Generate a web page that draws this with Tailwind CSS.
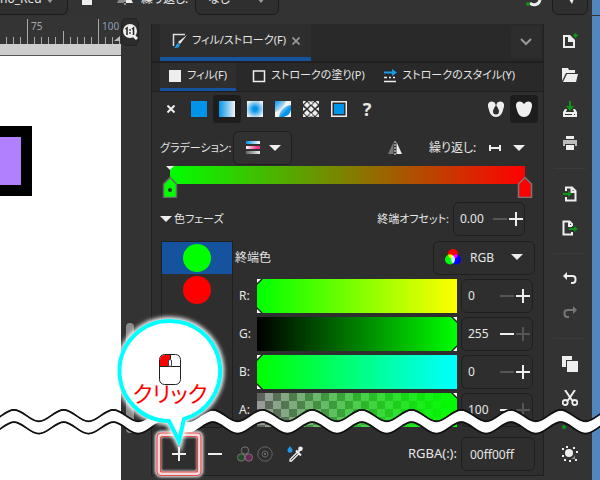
<!DOCTYPE html>
<html lang="ja">
<head>
  <meta charset="UTF-8" />
  <title>フィル/ストローク</title>
  <script src="https://cdn.jsdelivr.net/npm/@tailwindcss/browser@4"></script>
</head>
<body class="relative flex flex-col min-h-screen overflow-hidden bg-[#333] text-[#e6e6e6] text-xs font-['Noto_Sans','Noto_Sans_CJK_JP',sans-serif] [font-feature-settings:'palt']">

  <!-- tool controls -->
  <header class="flex items-end h-4 pb-px overflow-hidden shrink-0">
    <div class="relative w-[68px] h-8 shrink-0">
      <select aria-label="グラデーション" class="appearance-none w-full h-8 border border-[#1c1c1c] border-l-0 rounded-r-md bg-[#2f2f2f]"><option>no_Red</option></select>
      <svg class="absolute right-3 top-3 w-3 h-2" viewBox="0 0 12 8"><path d="M2 3h8L6 8z" fill="#999"/></svg>
    </div>
    <svg class="w-3 h-8 ml-[13px] shrink-0" viewBox="0 0 12 32"><path d="M1 10h10v12H1z" fill="#eee"/></svg>
    <svg class="w-4 h-8 ml-6 shrink-0" viewBox="0 0 16 32"><path d="M7 6v14H0z" fill="#888"/><path d="M9 6v14h7z" fill="#eee"/><path d="M8 5v18" stroke="#eee" stroke-dasharray="2 1"/></svg>
    <span class="h-8 leading-8 ml-2 w-[54px] whitespace-nowrap">繰り返し:</span>
    <div class="relative w-[84px] h-8 shrink-0">
      <select aria-label="繰り返し" class="appearance-none w-full h-8 pl-3 border border-[#1c1c1c] rounded-md bg-[#2f2f2f]"><option>なし</option></select>
      <svg class="absolute right-3 top-3 w-3 h-2" viewBox="0 0 12 8"><path d="M2 3h8L6 8z" fill="#999"/></svg>
    </div>
    <svg class="w-5 h-8 ml-auto shrink-0" viewBox="0 0 20 32"><path d="M8 20c3 3 9 2 10-3" fill="none" stroke="#eee" stroke-width="3"/><circle cx="6" cy="21" r="2" fill="#0a9614"/></svg>
    <button aria-label="スナップ" class="flex items-center justify-center w-9 h-8 ml-2.5 mr-1 border border-[#1c1c1c] rounded-md bg-[#2f2f2f] shrink-0">
      <svg class="w-4 h-4" viewBox="0 0 16 16"><path d="M5 5h8l-3 8z" fill="#eee"/></svg>
    </button>
    <div class="w-2 h-8 bg-[#5286bf] shrink-0"></div>
  </header>

  <main class="flex grow">
    <!-- canvas and ruler -->
    <section class="w-[121px] shrink-0 bg-white">
      <svg class="w-full h-10" viewBox="0 0 121 40">
        <defs>
          <pattern id="ticks" x="27" y="0" width="71" height="28" patternUnits="userSpaceOnUse">
            <path d="M.5 3v25M7.500 21v7M14.500 21v7M21.500 21v7M28.500 21v7M36.500 15v13M43.500 21v7M50.500 21v7M57.500 21v7M64.500 21v7" stroke="#aaa"/>
          </pattern>
        </defs>
        <path d="M0 0h121v28H0z" fill="#343434"/>
        <path d="M0 0h121v28H0z" fill="url(#ticks)"/>
        <path d="M0 28h121v11H0z" fill="#cdcdcd"/>
        <path d="M0 39h121v1H0z" fill="#555"/>
        <path d="M114 25h6v-5z" fill="#bbb"/>
        <text x="31" y="14" font-size="10" fill="#aaa">75</text>
        <text x="102" y="14" font-size="10" fill="#8b9db8">100</text>
      </svg>
      <svg class="w-8 h-[70px] mt-[70px]" viewBox="0 0 32 70"><path d="M0 0h32v70H0z"/><path d="M0 11h21v48H0z" fill="#b080ff"/></svg>
    </section>

    <!-- zoom button and vertical scrollbar -->
    <div class="flex flex-col items-start w-[30px] shrink-0">
      <button aria-label="1:1" class="flex items-center w-[18px] h-7 mt-0.5 border border-[#222] rounded-md bg-[#2c2c2c]">
        <svg class="w-4 h-4" viewBox="0 0 16 16"><circle cx="8" cy="7" r="7" fill="#eee"/><path d="M11 11l4 4" stroke="#eee" stroke-width="3"/><path d="M3.500 5L5 4v7M10 5l1.500-1v7" fill="none" stroke="#222" stroke-width="1.500"/><path d="M8 5v2M8 8v2" stroke="#222" stroke-width="1.200"/></svg>
      </button>
      <div class="w-2 h-[110px] mt-[277px] ml-[5px] rounded-full bg-[#8c8c8c]"></div>
    </div>

    <!-- fill and stroke dialog -->
    <section class="flex flex-col grow min-w-0 mt-2 mb-1 border-x border-b border-[#202020] bg-[#2e2e2e]">
      <div class="flex h-[38px] pl-2 pr-0.5 bg-[#292929] border-b border-[#1f1f1f]">
        <div class="flex items-center w-[151px] pl-3 gap-1 bg-[#2e2e2e] border-b-4 border-[#16539f]">
          <svg class="w-4 h-4 shrink-0" viewBox="0 0 16 16"><path d="M13 1.500H1.500V13" fill="none" stroke="#ddd" stroke-width="1.500"/><path d="M15 2L8 11 6 9z" fill="#eee"/><path d="M6 10l2 2c-1 3-3 3-6 3 2-1 2-4 4-5z" fill="#1b9ae8"/></svg>
          <button class="text-[11px] whitespace-nowrap">フィル/ストローク(F)</button>
          <button aria-label="閉じる" class="ml-0.5"><svg class="w-2 h-2" viewBox="0 0 8 8"><path d="M.5.5l7 7m0-7l-7 7" stroke="#999" stroke-width="1.700"/></svg></button>
        </div>
        <button aria-label="メニュー" class="flex items-center justify-center w-[30px] h-8 ml-auto mt-0.5 bg-[#2d2d2d]">
          <svg class="w-3 h-2" viewBox="0 0 12 8"><path d="M1 1l5 5 5-5" fill="none" stroke="#999" stroke-width="2"/></svg>
        </button>
      </div>

      <div class="flex h-[30px] pl-2 bg-[#292929] border-y border-[#1f1f1f] text-[11px] whitespace-nowrap">
        <button class="flex items-center gap-1 w-[76px] pl-[7px] border-b-[3px] border-[#16539f] bg-[#2e2e2e]">
          <svg class="w-4 h-4" viewBox="0 0 16 16"><path d="M2 2h12v12H2z" fill="#eee"/></svg>フィル(F)
        </button>
        <button class="flex items-center gap-1 ml-[15px] pb-[3px]">
          <svg class="w-4 h-4" viewBox="0 0 16 16"><path d="M2.500 3h11v10.500h-11z" fill="none" stroke="#eee" stroke-width="1.500"/></svg>ストロークの塗り(P)
        </button>
        <button class="flex items-center gap-1 ml-auto mr-7 pb-[3px]">
          <svg class="w-4 h-4" viewBox="0 0 16 16"><path d="M2 3.500h8V1l5 3.500L10 8V5.500H2z" fill="#1b9ae8"/><path d="M2 9.500h3m2 0h2m2 0h2M2 13.500h12" stroke="#eee" stroke-width="1.500"/></svg>ストロークのスタイル(Y)
        </button>
      </div>

      <div class="flex h-7 mt-[3px] px-[5px]">
        <button aria-label="なし" class="flex items-center justify-center w-7"><svg class="w-2 h-2" viewBox="0 0 8 8"><path d="M.5.5l7 7m0-7l-7 7" stroke="#eee" stroke-width="2"/></svg></button>
        <button aria-label="単一色" class="flex items-center justify-center w-7"><svg class="w-4 h-4" viewBox="0 0 16 16"><path d="M0 0h16v16H0z" fill="#0094ea"/></svg></button>
        <button aria-label="線形グラデーション" class="flex items-center justify-center w-7 rounded bg-[#1d1d1d]">
          <svg class="w-4 h-4" viewBox="0 0 16 16"><defs><linearGradient id="lin"><stop stop-color="#0094ea"/><stop offset="1" stop-color="#f4f4f4"/></linearGradient></defs><path d="M0 0h16v16H0z" fill="url(#lin)"/></svg>
        </button>
        <button aria-label="放射グラデーション" class="flex items-center justify-center w-7">
          <svg class="w-4 h-4" viewBox="0 0 16 16"><defs><radialGradient id="rad" r=".6"><stop offset=".2" stop-color="#0094ea"/><stop offset="1" stop-color="#f4f4f4"/></radialGradient></defs><path d="M0 0h16v16H0z" fill="url(#rad)"/></svg>
        </button>
        <button aria-label="メッシュ" class="flex items-center justify-center w-7">
          <svg class="w-4 h-4" viewBox="0 0 16 16"><defs><linearGradient id="mesh" x2="1" y2="1"><stop stop-color="#0094ea"/><stop offset=".8" stop-color="#f4f4f4"/></linearGradient><linearGradient id="mesh2" x2="1" y2="1"><stop offset=".1" stop-color="#d5ecfa"/><stop offset=".6" stop-color="#0094ea"/></linearGradient></defs><path d="M0 0h16v16H0z" fill="#f4f4f4"/><path d="M0 0h11C9 6 6 9 0 11z" fill="url(#mesh)"/><path d="M16 4v5c-1 4-3 6-7 7H4C5 9 9 5 16 4z" fill="url(#mesh2)"/><path d="M16 9v7H9c4-1 6-3 7-7z" fill="#f4f4f4"/></svg>
        </button>
        <button aria-label="パターン" class="flex items-center justify-center w-7">
          <svg class="w-4 h-4" viewBox="0 0 16 16"><path d="M0 0h3L1.500 2 0 3zM5 0h2L6 2zM9 0h2l-1 2zM13 0h3v3l-2-1zM0 13l2 1 1 2H0zM6 14l1 2H5zM10 14l1 2H9zM16 13v3h-3l1-2z" fill="#eee"/><path d="M4 1l3 3-3 3-3-3zM12 1l3 3-3 3-3-3zM8 5l3 3-3 3-3-3zM4 9l3 3-3 3-3-3zM12 9l3 3-3 3-3-3zM0 6l3 2-3 2zM16 6v4l-3-2zM8 0l2 2-2 2-2-2zM8 12l2 2-2 2-2-2z" fill="#eee"/></svg>
        </button>
        <button aria-label="スウォッチ" class="flex items-center justify-center w-7"><svg class="w-4 h-4" viewBox="0 0 16 16"><path d="M.75.75h14.500v14.500H.75z" fill="none" stroke="#eee" stroke-width="1.500"/><path d="M3 3h10v10H3z" fill="#0094ea"/></svg></button>
        <button aria-label="未設定" class="flex items-center justify-center w-7 text-lg font-bold">?</button>
        <button aria-label="奇偶" class="flex items-center justify-center w-7 ml-auto">
          <svg class="w-4 h-4" viewBox="0 0 16 16"><path fill-rule="evenodd" d="M8 3C6 0 3 0 1.500 1-1 3 0 6 1 9c1 4 3 7 7 7s6-3 7-7c1-3 2-6-.5-8C13 0 10 0 8 3zm0 1c1 2 3 4 3 6.500a3 3 0 0 1-6 0C5 8 7 6 8 4z" fill="#eee"/><path d="M6.500 0h3L8 5z" fill="#2e2e2e"/></svg>
        </button>
        <button aria-label="非ゼロ" class="flex items-center justify-center w-7 rounded bg-[#1d1d1d]">
          <svg class="w-4 h-4" viewBox="0 0 16 16"><path d="M8 3C6 0 3 0 1.500 1-1 3 0 6 1 9c1 4 3 7 7 7s6-3 7-7c1-3 2-6-.5-8C13 0 10 0 8 3z" fill="#eee"/></svg>
        </button>
      </div>

      <div class="flex items-center h-[34px] mt-2 pl-2 pr-[18px] whitespace-nowrap">
        <span class="w-[73px] text-[11px]">グラデーション:</span>
        <button aria-label="グラデーションを選択" class="flex items-center justify-center gap-2 w-[59px] h-[34px] border border-[#1f1f1f] rounded-md bg-[#313131]">
          <svg class="w-4 h-4" viewBox="0 0 16 16"><defs><linearGradient id="g1"><stop stop-color="#0094ea"/><stop offset="1" stop-color="#fff"/></linearGradient><linearGradient id="g2"><stop stop-color="#fff"/><stop offset=".8" stop-color="#f0308c"/></linearGradient><linearGradient id="g3"><stop stop-color="#666"/><stop offset="1" stop-color="#eee"/></linearGradient></defs><path d="M1 1h14v3H1z" fill="url(#g1)"/><path d="M1 6h14v3H1z" fill="url(#g2)"/><path d="M1 11h14v3H1z" fill="url(#g3)"/></svg>
          <svg class="w-3 h-2" viewBox="0 0 12 8"><path d="M0 1h12L6 7z" fill="#eee"/></svg>
        </button>
        <button aria-label="反転" class="ml-auto"><svg class="w-4 h-4" viewBox="0 0 16 16"><path d="M6.500 2v12H1z" fill="#777"/><path d="M9.500 2v12H15z" fill="#eee"/><path d="M8 1v14" stroke="#eee" stroke-dasharray="2 1"/></svg></button>
        <span class="ml-[26px] w-11">繰り返し:</span>
        <button aria-label="繰り返しの種類" class="flex items-center gap-3 ml-4">
          <svg class="w-3 h-3" viewBox="0 0 12 12"><path d="M1 3v6M11 3v6M1 6h10" stroke="#eee" stroke-width="2" fill="none"/></svg>
          <svg class="w-3 h-2" viewBox="0 0 12 8"><path d="M0 1h12L6 7z" fill="#eee"/></svg>
        </button>
      </div>

      <div class="relative h-[34px] mx-[18px] mt-px">
        <div class="h-[18px] bg-[linear-gradient(to_right,#0f0,#f00)]"></div>
        <svg class="absolute -left-2 top-0 w-4 h-8" viewBox="0 0 16 32"><path d="M4 0h8L8 4z" fill="#eee"/><path d="M8 11.500l6.500 6.500v13.500h-13V18z" fill="#0f0" stroke="#666" stroke-width="1.500"/><circle cx="8" cy="24" r="2" fill="#333"/></svg>
        <svg class="absolute -right-2 top-0 w-4 h-8" viewBox="0 0 16 32"><path d="M8 11.500l6.500 6.500v13.500h-13V18z" fill="#f00" stroke="#777" stroke-width="1.500"/></svg>
      </div>

      <div class="flex items-center h-[34px] mt-0.5 pl-2 pr-[18px] text-[11px] whitespace-nowrap">
        <button class="flex items-center gap-0.5"><svg class="w-3 h-2" viewBox="0 0 12 8"><path d="M0 1h12L6 7z" fill="#eee"/></svg>色フェーズ</button>
        <label for="offset" class="ml-auto mr-1">終端オフセット:</label>
        <div class="flex items-center w-[72px] h-[34px] pl-1.5 border border-[#1f1f1f] rounded-md">
          <input id="offset" value="0.00" class="w-8 min-w-0 text-xs" />
          <button aria-label="減らす"><svg class="w-4 h-4" viewBox="0 0 16 16"><path d="M1 8h14" stroke="#555" stroke-width="2"/></svg></button>
          <button aria-label="増やす"><svg class="w-4 h-4" viewBox="0 0 16 16"><path d="M1 8h14M8 1v14" stroke="#eee" stroke-width="2"/></svg></button>
        </div>
      </div>

      <div class="flex mt-[5px] pl-[9px] pr-2 h-[187px]">
        <div class="w-[72px] border border-[#1f1f1f] shrink-0">
          <button aria-label="緑" class="flex items-center justify-center w-full h-8 bg-[#16539f]"><span class="w-7 h-7 rounded-full bg-[#0f0]"></span></button>
          <button aria-label="赤" class="flex items-center justify-center w-full h-8"><span class="w-7 h-7 rounded-full bg-[#f00]"></span></button>
        </div>
        <div class="flex flex-col gap-1 grow pl-0.5">
          <div class="flex items-center justify-between h-[34px]">
            <label for="mode">終端色</label>
            <div class="relative w-[102px] h-[34px]">
              <select id="mode" class="appearance-none w-full h-full pl-9 border border-[#1f1f1f] rounded-md bg-[#2e2e2e]"><option>RGB</option></select>
              <svg class="absolute left-3 top-2 w-4 h-4 pointer-events-none" viewBox="0 0 16 16"><circle cx="8" cy="5" r="5" fill="#f00"/><circle cx="5" cy="10.500" r="5" fill="#0f0"/><circle cx="11" cy="10.500" r="5" fill="#00f"/><path d="M8 6.500A5 5 0 0 0 3.200 5.800 5 5 0 0 0 8 10z" fill="#ff0"/><path d="M8 6.500a5 5 0 0 1 4.800-.7A5 5 0 0 1 8 10z" fill="#f0f"/><path d="M8 6.500a5 5 0 0 0 0 8 5 5 0 0 0 0-8z" fill="#bff"/></svg>
              <svg class="absolute right-3 top-3 w-3 h-2 pointer-events-none" viewBox="0 0 12 8"><path d="M0 1h12L6 7z" fill="#eee"/></svg>
            </div>
          </div>
          <div class="flex items-center h-[34px] pr-0.5">
            <label for="r" class="w-4 ml-1 mr-0.5">R:</label>
            <div class="relative grow h-[34px]">
              <input id="r" type="range" min="0" max="255" value="0" class="block appearance-none w-full h-full bg-[linear-gradient(to_right,#0f0,#ff0)] [&::-webkit-slider-thumb]:appearance-none" />
              <svg class="absolute left-0 top-0 w-2 h-[34px] pointer-events-none" viewBox="0 0 8 34"><path d="M0 0h6L0 6zM0 34h6L0 28z" fill="#222"/><path d="M0 0h4L0 4zM0 34h4L0 30z" fill="#fff"/></svg>
            </div>
            <div class="flex items-center w-[72px] h-[34px] ml-1 pl-1.5 border border-[#1f1f1f] rounded-md">
              <input aria-label="R" value="0" class="w-[31px] min-w-0" />
              <button aria-label="減らす"><svg class="w-4 h-4" viewBox="0 0 16 16"><path d="M1 8h14" stroke="#555" stroke-width="2"/></svg></button>
              <button aria-label="増やす"><svg class="w-4 h-4" viewBox="0 0 16 16"><path d="M1 8h14M8 1v14" stroke="#eee" stroke-width="2"/></svg></button>
            </div>
          </div>
          <div class="flex items-center h-[34px] pr-0.5">
            <label for="g" class="w-4 ml-1 mr-0.5">G:</label>
            <div class="relative grow h-[34px]">
              <input id="g" type="range" min="0" max="255" value="255" class="block appearance-none w-full h-full bg-[linear-gradient(to_right,#000,#0f0)] [&::-webkit-slider-thumb]:appearance-none" />
              <svg class="absolute right-0 top-0 w-2 h-[34px] pointer-events-none" viewBox="0 0 8 34"><path d="M8 0H2l6 6zM8 34H2l6-6z" fill="#222"/><path d="M8 0H4l4 4zM8 34H4l4-4z" fill="#fff"/></svg>
            </div>
            <div class="flex items-center w-[72px] h-[34px] ml-1 pl-1.5 border border-[#1f1f1f] rounded-md">
              <input aria-label="G" value="255" class="w-[31px] min-w-0" />
              <button aria-label="減らす"><svg class="w-4 h-4" viewBox="0 0 16 16"><path d="M1 8h14" stroke="#eee" stroke-width="2"/></svg></button>
              <button aria-label="増やす"><svg class="w-4 h-4" viewBox="0 0 16 16"><path d="M1 8h14M8 1v14" stroke="#555" stroke-width="2"/></svg></button>
            </div>
          </div>
          <div class="flex items-center h-[34px] pr-0.5">
            <label for="b" class="w-4 ml-1 mr-0.5">B:</label>
            <div class="relative grow h-[34px]">
              <input id="b" type="range" min="0" max="255" value="0" class="block appearance-none w-full h-full bg-[linear-gradient(to_right,#0f0,#0ff)] [&::-webkit-slider-thumb]:appearance-none" />
              <svg class="absolute left-0 top-0 w-2 h-[34px] pointer-events-none" viewBox="0 0 8 34"><path d="M0 0h6L0 6zM0 34h6L0 28z" fill="#222"/><path d="M0 0h4L0 4zM0 34h4L0 30z" fill="#fff"/></svg>
            </div>
            <div class="flex items-center w-[72px] h-[34px] ml-1 pl-1.5 border border-[#1f1f1f] rounded-md">
              <input aria-label="B" value="0" class="w-[31px] min-w-0" />
              <button aria-label="減らす"><svg class="w-4 h-4" viewBox="0 0 16 16"><path d="M1 8h14" stroke="#555" stroke-width="2"/></svg></button>
              <button aria-label="増やす"><svg class="w-4 h-4" viewBox="0 0 16 16"><path d="M1 8h14M8 1v14" stroke="#eee" stroke-width="2"/></svg></button>
            </div>
          </div>
          <div class="flex items-center h-[34px] pr-0.5">
            <label for="a" class="w-4 ml-1 mr-0.5">A:</label>
            <div class="relative grow h-[34px]">
              <input id="a" type="range" min="0" max="100" value="100" class="block appearance-none w-full h-full bg-[linear-gradient(to_right,#00ff0000,#00ff00),repeating-conic-gradient(#9a9a9a_0_25%,#606060_0_50%)] bg-[length:auto,16px_16px] [&::-webkit-slider-thumb]:appearance-none" />
              <svg class="absolute right-0 top-0 w-2 h-[34px] pointer-events-none" viewBox="0 0 8 34"><path d="M8 0H2l6 6z" fill="#222"/><path d="M8 0H4l4 4z" fill="#fff"/></svg>
            </div>
            <div class="flex items-center w-[72px] h-[34px] ml-1 pl-1.5 border border-[#1f1f1f] rounded-md">
              <input aria-label="A" value="100" class="w-[31px] min-w-0" />
              <button aria-label="減らす"><svg class="w-4 h-4" viewBox="0 0 16 16"><path d="M1 8h14" stroke="#eee" stroke-width="2"/></svg></button>
              <button aria-label="増やす"><svg class="w-4 h-4" viewBox="0 0 16 16"><path d="M1 8h14M8 1v14" stroke="#555" stroke-width="2"/></svg></button>
            </div>
          </div>
        </div>
      </div>

      <div class="flex items-center h-[34px] mt-[9px] pl-[9px] pr-2">
        <button aria-label="色フェーズを追加" class="flex items-center justify-center w-9 h-[34px] border border-[#1f1f1f] rounded-md"><svg class="w-4 h-4" viewBox="0 0 16 16"><path d="M1 8h14M8 1v14" stroke="#eee" stroke-width="2"/></svg></button>
        <button aria-label="色フェーズを削除" class="flex items-center justify-center w-9"><svg class="w-4 h-4" viewBox="0 0 16 16"><path d="M1 8h14" stroke="#eee" stroke-width="2"/></svg></button>
        <button aria-label="カラーマネジメント" class="ml-1"><svg class="w-4 h-4" viewBox="0 0 16 16"><g stroke="#777"><circle cx="8" cy="4.500" r="3.700" fill="none"/><circle cx="4.200" cy="11.500" r="3.700" fill="#244a2a"/><circle cx="11.800" cy="11.500" r="3.700" fill="#6e2456"/></g></svg></button>
        <button aria-label="色域外" class="ml-1"><svg class="w-4 h-4" viewBox="0 0 16 16"><g fill="none" stroke="#666"><circle cx="8" cy="8" r="7.200"/><circle cx="8" cy="8" r="3"/></g><path d="M7 7h2v2H7z" fill="#666"/></svg></button>
        <button aria-label="スポイト" class="ml-3.5"><svg class="w-4 h-4" viewBox="0 0 16 16"><path d="M3 0c1 2 2.500 2.500 2.500 4.200a2.500 2.500 0 0 1-5 0C.5 2.500 2 2 3 0z" fill="#1b9ae8"/><path d="M10.500 6L3 13.500V15h1.500L12 7.500" fill="none" stroke="#eee" stroke-width="1.300"/><path d="M9 4.500l5 5M11 6l3-3.500" stroke="#eee" stroke-width="2"/><circle cx="13.500" cy="2.800" r="2.300" fill="#eee"/></svg></button>
        <label for="rgba" class="ml-auto mr-1 text-[13px]">RGBA(:):</label>
        <input id="rgba" value="00ff00ff" class="w-[74px] h-[34px] pl-2 border border-[#1f1f1f] rounded-md" />
      </div>
    </section>

    <!-- commands bar -->
    <nav class="flex flex-col items-center w-12 pt-2 pl-1 shrink-0">
      <button aria-label="新規" class="h-[34px]"><svg class="w-4 h-4" viewBox="0 0 16 16"><path d="M1 2h7v5h5v8H1zm2 2v9h8V9H6V4z" fill="#eee" fill-rule="evenodd"/><path d="M8 2l5 5H8z" fill="#eee"/><path d="M13.500 0v5M11 2.500h5M12 1l3 3m0-3l-3 3" stroke="#0a9614"/></svg></button>
      <button aria-label="開く" class="h-[34px]"><svg class="w-4 h-4" viewBox="0 0 16 16"><path d="M0 1h6l1 2h6v3H4L0 14z" fill="#eee"/><path d="M5 7h11l-2 8H1z" fill="#eee"/></svg></button>
      <button aria-label="保存" class="h-[34px]"><svg class="w-4 h-4" viewBox="0 0 16 16"><path d="M7 0h2v5h3L8 10 4 5h3z" fill="#0a9614"/><path d="M3 8L1 11v5h14v-5l-2-3h-2l1 3H4l1-3zm0 5h7v1H3zm9 0h1v1h-1z" fill="#eee" fill-rule="evenodd"/></svg></button>
      <button aria-label="印刷" class="h-[34px]"><svg class="w-4 h-4" viewBox="0 0 16 16"><path d="M4 1h8v3H4zM4 10h8v5H4z" fill="#eee"/><path d="M1 5h14v6h-2V9H3v2H1z" fill="#bbb"/></svg></button>
      <div class="w-8 h-px my-2 bg-[#3b3b3b]"></div>
      <button aria-label="インポート" class="h-[34px]"><svg class="w-4 h-4" viewBox="0 0 16 16"><path d="M4 5V1.500h6L13.500 5v9.500H4V11M9.500 2v4H13" fill="none" stroke="#eee" stroke-width="2"/><path d="M1 7h5V5l4 3-4 3V9H1z" fill="#0a9614"/></svg></button>
      <button aria-label="エクスポート" class="h-[34px]"><svg class="w-4 h-4" viewBox="0 0 16 16"><path d="M10 6V4L7.500 1.500H1.500v13H10V12M7 2v4h3" fill="none" stroke="#eee" stroke-width="2"/><path d="M7 8h5V6l4 3-4 3v-2H7z" fill="#0a9614"/></svg></button>
      <div class="w-8 h-px my-2 bg-[#3b3b3b]"></div>
      <button aria-label="元に戻す" class="h-[34px]"><svg class="w-4 h-4" viewBox="0 0 16 16"><path d="M4 5h6.500q3 0 3 3v1q0 3-3 3H9" fill="none" stroke="#eee" stroke-width="2"/><path d="M5 1v8L1 5z" fill="#eee"/></svg></button>
      <button aria-label="やり直す" class="h-[34px]"><svg class="w-4 h-4" viewBox="0 0 16 16"><path d="M12 5H5.500q-3 0-3 3v1q0 3 3 3H7" fill="none" stroke="#777" stroke-width="2"/><path d="M11 1v8l4-4z" fill="#777"/></svg></button>
      <div class="w-8 h-px my-2 bg-[#3b3b3b]"></div>
      <button aria-label="コピー" class="h-[34px]"><svg class="w-4 h-4" viewBox="0 0 16 16"><path d="M0 0h10v4H4v7H0z" fill="#eee"/><path d="M5 5h11v11H5z" fill="#eee"/></svg></button>
      <button aria-label="切り取り" class="h-[34px]"><svg class="w-4 h-4" viewBox="0 0 16 16"><path d="M3 0l7.500 11M13 0L5.500 11" stroke="#eee" stroke-width="2"/><g fill="none" stroke="#eee" stroke-width="1.800"><circle cx="3.200" cy="12.500" r="2.500"/><circle cx="12.800" cy="12.500" r="2.500"/></g></svg></button>
      <button aria-label="貼り付け" class="h-[22px]"><svg class="w-4 h-4" viewBox="0 0 16 16"><circle cx="2" cy="9" r="2" fill="#0a9614"/></svg></button>
      <button aria-label="選択オブジェクトにズーム" class="h-[34px]"><svg class="w-4 h-4" viewBox="0 0 16 16"><circle cx="7" cy="7" r="4" fill="#eee"/><path d="M13 7v6H7c4 0 6-2 6-6z" fill="#999"/><path d="M0 2h2v2H0zM4 0h2v2H4zM11 1h2v2h-2zM14 5h2v2h-2zM0 9h2v2H0zM2 13h2v2H2zM7 14h2v2H7zM13 13h2v2h-2z" fill="#eee"/></svg></button>
    </nav>
    <div class="w-2 bg-[#5286bf] shrink-0"></div>
  </main>

  <!-- cut line, highlight frame and balloon lie over the window -->
  <svg class="absolute left-0 top-[400px] w-[600px] h-10 pointer-events-none" viewBox="0 0 600 40">
    <defs>
      <path id="wave" d="M-35.700 10c9 0 15.850 11.500 24.850 11.500S5 10 14 10s15.850 11.500 24.850 11.500S54.700 10 63.700 10s15.850 11.500 24.850 11.500S104.400 10 113.400 10s15.850 11.500 24.850 11.500S154.100 10 163.100 10s15.850 11.500 24.850 11.500S203.800 10 212.800 10s15.850 11.500 24.850 11.500S253.500 10 262.500 10s15.850 11.500 24.850 11.500S303.200 10 312.200 10s15.850 11.500 24.850 11.500S352.900 10 361.900 10s15.850 11.500 24.850 11.500S402.600 10 411.600 10s15.850 11.500 24.850 11.500S452.300 10 461.300 10s15.850 11.500 24.850 11.500S502 10 511 10s15.850 11.500 24.850 11.500S551.700 10 560.700 10s15.850 11.500 24.850 11.500S601.400 10 610.400 10" fill="none"/>
    </defs>
    <g stroke="#111" stroke-width="2"><use href="#wave"/><use href="#wave" y="12"/></g>
    <g stroke="#fff" stroke-width="3"><use href="#wave" y="2"/><use href="#wave" y="4"/><use href="#wave" y="6"/><use href="#wave" y="8"/><use href="#wave" y="10"/></g>
    <g stroke="#111" stroke-width="1.500"><use href="#wave"/><use href="#wave" y="12"/></g>
  </svg>
  <svg class="absolute left-[150px] top-[426px] w-[60px] h-[54px] pointer-events-none" viewBox="0 0 60 54">
    <defs><filter id="soft" x="-20%" y="-20%" width="140%" height="140%"><feGaussianBlur stdDeviation="1.500"/></filter></defs>
    <rect x="8" y="8" width="42" height="40" rx="3" fill="none" stroke="#fff" stroke-width="6" filter="url(#soft)"/>
    <rect x="8.500" y="8.500" width="41" height="39.500" rx="3" fill="none" stroke="#f3dcdb" stroke-width="4"/>
    <rect x="7" y="7" width="44" height="42.500" rx="4" fill="none" stroke="#e04a48" stroke-width="1.200"/>
    <rect x="10.500" y="10.500" width="37" height="35.500" rx="2" fill="none" stroke="#e04a48" stroke-width="1.200"/>
  </svg>
  <svg class="absolute left-[110px] top-[311px] w-[120px] h-36 pointer-events-none" viewBox="0 0 120 144">
    <defs><filter id="glow" x="-20%" y="-20%" width="140%" height="140%"><feGaussianBlur stdDeviation="2"/></filter></defs>
    <path d="M60 10a50 50 0 0 1 22 95L74 108 69 130 59 110A50 50 0 1 1 60 10z" fill="#fff" stroke="#fff" stroke-width="8" filter="url(#glow)"/>
    <path d="M60 10a50 50 0 0 1 22 95L74 108 69 130 59 110A50 50 0 1 1 60 10z" fill="#fff" stroke="#0ff" stroke-width="4"/>
    <path d="M50 55V49q0-5 5-5h5v11z" fill="#f00"/>
    <rect x="49.500" y="43.500" width="21" height="30" rx="5" fill="none" stroke="#222"/>
    <path d="M49.500 55.500h21M60.500 44v4" stroke="#222"/>
    <rect x="58.500" y="48.500" width="3" height="7" rx="1.500" fill="#fff" stroke="#444"/>
    <text x="60" y="91" text-anchor="middle" font-size="22" fill="#f00">クリック</text>
  </svg>

</body>
</html>
